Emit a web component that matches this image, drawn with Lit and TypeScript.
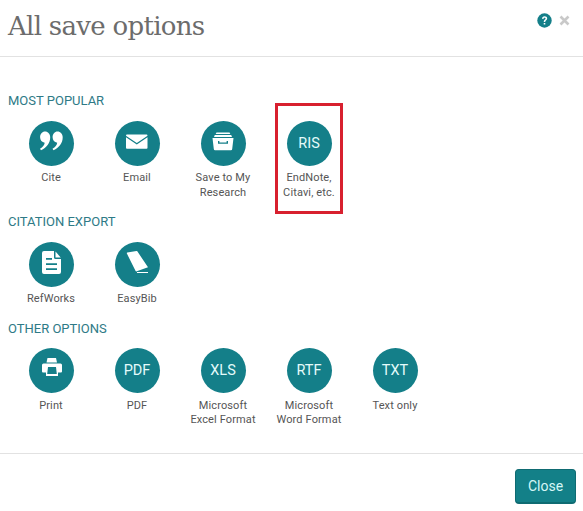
import { LitElement, html, css, svg } from "lit";
import { customElement } from "lit/decorators.js";

const quote = (x: number) =>
  svg`<path transform="translate(${x} 0)" d="M16 10.500c3 0 5.200 2.500 5.200 5.800 0 5.800-3.700 10.600-9.200 13l-1-1.500c2.800-1.600 4.400-3.700 4.700-6.100-2.700-.3-4.600-2.600-4.600-5.400 0-3.300 2.100-5.800 4.900-5.800z"/>`;

const icons: Record<string, unknown> = {
  cite: svg`${quote(0)}${quote(12.5)}`,
  email: svg`<path d="M11.800 13.500h19.900a.8.800 0 0 1 .5 1.400L21.800 21.900 11.300 14.900a.8.800 0 0 1 .5-1.400z"/><path d="M11 16.200 21.800 23.400l10.700-7.200V26.800a.9.900 0 0 1-.9.900H11.900a.9.900 0 0 1-.9-.9z"/>`,
  save: svg`<path d="M15.500 11.500h13l.8 1.500h-14.600z"/><path d="M13.800 14h16.400l.8 2H13z"/><path fill-rule="evenodd" d="M11.500 17h21l-1.300 11a1.300 1.300 0 0 1-1.300 1.200H14.100a1.300 1.300 0 0 1-1.300-1.200zM17 20v2.800h10V20h-1.400v1.400h-7.200V20z"/>`,
  doc: svg`<path fill-rule="evenodd" d="M15 9h10v6.500a1.500 1.500 0 0 0 1.500 1.500H32v13a2 2 0 0 1-2 2H15a2 2 0 0 1-2-2V11a2 2 0 0 1 2-2zm2 7v1.800h6V16zm0 5.200V23h11v-1.800zm0 5v1.800h11v-1.800z"/><path d="M26.500 9.500 31.700 15.500h-5.200z"/>`,
  book: svg`<path d="M12.300 10.600 21.500 9a.8.800 0 0 1 .8.300L33 25.300 21.800 29.300a1 1 0 0 1-1.200-.4L11.900 11.600a.7.700 0 0 1 .4-1z"/><path d="M22 30h11v1H22z"/>`,
  print: svg`<path d="M18.500 10h8.500l1 4.500H17.500z"/><path fill-rule="evenodd" d="M14.500 15.500h17a1.500 1.500 0 0 1 1.500 1.500v6.500a1 1 0 0 1-1 1h-3v3.500H17v-3.500h-3a1 1 0 0 1-1-1V17a1.500 1.500 0 0 1 1.500-1.500zM19 19l-.8 7h9.600l-.8-7z"/>`,
};

type Item = { label: string[]; icon?: string; text?: string; marked?: boolean };
type Section = { title: string; cls: string; items: Item[] };

const sections: Section[] = [
  {
    title: "MOST POPULAR",
    cls: "first",
    items: [
      { label: ["Cite"], icon: "cite" },
      { label: ["Email"], icon: "email" },
      { label: ["Save to My", "Research"], icon: "save" },
      { label: ["EndNote,", "Citavi, etc."], text: "RIS", marked: true },
    ],
  },
  {
    title: "CITATION EXPORT",
    cls: "second",
    items: [
      { label: ["RefWorks"], icon: "doc" },
      { label: ["EasyBib"], icon: "book" },
    ],
  },
  {
    title: "OTHER OPTIONS",
    cls: "third",
    items: [
      { label: ["Print"], icon: "print" },
      { label: ["PDF"], text: "PDF" },
      { label: ["Microsoft", "Excel Format"], text: "XLS" },
      { label: ["Microsoft", "Word Format"], text: "RTF" },
      { label: ["Text only"], text: "TXT" },
    ],
  },
];

@customElement("app-root")
export class AppRoot extends LitElement {
  static styles = css`
    :host {
      display: block;
      width: 583px;
      height: 511px;
      background: #fff;
      font-family: Roboto, "Liberation Sans", sans-serif;
      overflow: hidden;
    }
    .header {
      box-sizing: border-box;
      border-bottom: 1px solid #e2e2e2;
      display: flex;
      justify-content: space-between;
      padding: 0 13px 0 8px;
      height: 57px;
    }
    h1 {
      margin: 0;
      padding-top: 9px;
      font: 400 26px/34px "DejaVu Serif", "Liberation Serif", serif;
      letter-spacing: -0.7px;
      color: #6c6c6c;
    }
    .tools {
      display: flex;
      gap: 7px;
      padding-top: 13px;
      align-items: flex-start;
    }
    .tools svg { display: block; }
    .main {
      padding: 34px 0 0 8px;
      height: 397px;
      box-sizing: border-box;
      border-bottom: 1px solid #e2e2e2;
    }
    h2 {
      margin: 0;
      font: 400 13px/20px Roboto, sans-serif;
      color: #2e7a86;
    }
    .row {
      display: flex;
      margin-top: 10px;
    }
    section.first { height: 110px; padding-bottom: 11px; }
    section.second { height: 96px; padding-bottom: 11px; }
    section.third .row { margin-top: 9px; }
    section.third .label { margin-top: 6px; line-height: 14px; }
    .item {
      position: relative;
      width: 86px;
      display: flex;
      flex-direction: column;
      align-items: center;
    }
    .circle {
      position: relative;
      width: 45px;
      height: 45px;
      border-radius: 50%;
      background: #147f89;
      color: #e4fbfb;
      font-size: 14.5px;
      line-height: 46px;
      text-align: center;
    }
    .circle svg { display: block; width: 45px; height: 45px; fill: #fff; }
    .label {
      margin-top: 4px;
      font-size: 11px;
      letter-spacing: 0.12px;
      line-height: 15px;
      color: #555;
      text-align: center;
      white-space: nowrap;
    }
    .label span { display: block; }
    .mark {
      position: absolute;
      left: 9px;
      top: -18px;
      width: 68px;
      height: 111px;
      box-sizing: border-box;
      border: 3px solid #d8202f;
    }
    .footer {
      display: flex;
      justify-content: flex-end;
      padding: 15px 7px 0 0;
    }
    button {
      width: 61px;
      height: 35px;
      padding: 0;
      background: #138088;
      border: 1px solid #0f6b72;
      border-bottom-width: 2px;
      border-radius: 4px;
      color: #d6f7f7;
      font: 400 14px Roboto, sans-serif;
    }
  `;

  private renderItem(item: Item) {
    return html`<div class="item">
      <div class="circle">
        ${item.icon
          ? svg`<svg viewBox="0 0 45 45">${icons[item.icon]}</svg>`
          : item.text}
      </div>
      <div class="label">${item.label.map((l) => html`<span>${l}</span>`)}</div>
      ${item.marked ? html`<div class="mark"></div>` : null}
    </div>`;
  }

  render() {
    return html`
      <div class="header">
        <h1>All save options</h1>
        <div class="tools">
          <svg width="15" height="15" viewBox="0 0 15 15">
            <circle cx="7.500" cy="7.500" r="7.200" fill="#147f89" />
            <path d="M5 5.800C5 4.300 6.100 3.300 7.600 3.300S10.200 4.200 10.200 5.500c0 1.900-2 1.900-2 3.500H6.700c0-2.200 1.900-2.300 1.900-3.400 0-.5-.4-.9-1-.9S6.500 5.200 6.500 5.900zM6.700 9.900h1.600v1.600H6.700z" fill="#fff" />
          </svg>
          <svg width="11" height="15" viewBox="0 0 11 15">
            <path d="M1.500 3.500 9.500 11.500M9.500 3.500 1.500 11.500" stroke="#c9c9c9" stroke-width="2.600" fill="none" />
          </svg>
        </div>
      </div>
      <div class="main">
        ${sections.map(
          (s) => html`<section class=${s.cls}>
            <h2>${s.title}</h2>
            <div class="row">${s.items.map((i) => this.renderItem(i))}</div>
          </section>`
        )}
      </div>
      <div class="footer"><button>Close</button></div>
    `;
  }
}
